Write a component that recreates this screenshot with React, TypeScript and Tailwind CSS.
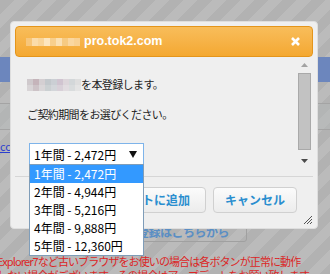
import React from 'react'

const jp = "font-['Noto_Sans_CJK_JP','Noto_Sans',sans-serif]"

const titleMosaic = ['#f7c67a', '#fbdcaa', '#f9d59a', '#fde6bf', '#f8cf8c', '#fbe0b2', '#f6ca82', '#fad7a0', '#f9d193']
const nameMosaicTop = ['#cfc9cc', '#c5b4ba', '#d4cfd2', '#c3c8cc', '#cbcfd4', '#d0c4d0', '#dcd5da', '#d3d7d9', '#dedede']
const nameMosaicBottom = ['#d8d4d6', '#cdc3c7', '#d9d6d8', '#cbd0d2', '#d3d6da', '#d8d0d8', '#e1dce0', '#d9dcdd', '#e4e4e4']

const plans = [
  '1年間 - 2,472円',
  '2年間 - 4,944円',
  '3年間 - 5,216円',
  '4年間 - 9,888円',
  '5年間 - 12,360円',
]

export default function App() {
  return (
    <div className={`relative w-[330px] h-[274px] overflow-hidden bg-[repeating-linear-gradient(135deg,#b2b2b2_0px,#b2b2b2_10px,#bbbbbb_10px,#bbbbbb_20px)] ${jp}`}>
      {/* page behind the overlay */}
      <div className="pt-[57px]">
        <div className="h-[25px] bg-[#6c86bd]" />
        <div className="h-[22px] border-b border-[#a4a4a4]" />
        <div className="h-[26px] border-b border-[#a4a4a4] bg-[#b3bab9]/40" />
        <div className="h-[10px]" />
        <p className="text-[11px] leading-[13px] text-[#2b3fcf] underline">co</p>
        <div className="h-[68px]" />
        <div className="ml-[40px] w-[207px] h-[21px] border border-[#a0a0a0] rounded-[3px] flex items-center justify-end pr-[17px] text-[12px] font-bold text-[#5a8ec4] tracking-[-0.5px]">
          新規登録はこちらから
        </div>
        <p className="mt-[12px] -ml-[3px] whitespace-nowrap text-[11px] leading-[14px] tracking-[-0.9px] text-[#dc2626]">
          Explorer7など古いブラウザをお使いの場合は各ボタンが正常に動作
          <br />
          しない場合がございます。その場合はアップデートをお願い致します。
        </p>
      </div>

      {/* dialog */}
      <div className="absolute left-[10px] top-[21px] w-[308px] h-[208px] rounded-[4px] border border-[#dedede] bg-[#efefef] p-[4px] flex flex-col">
        <div className="h-[31px] shrink-0 rounded-[4px] border border-[#e4951b] bg-gradient-to-b from-[#f8bd5a] to-[#f4a830] flex items-center pl-[10px] pr-[12px]">
          <div className="flex">
            {titleMosaic.map((c, i) => (
              <span key={i} className="w-[6px] h-[8px]" style={{ background: c }} />
            ))}
          </div>
          <span className="ml-[4px] font-['Liberation_Sans',sans-serif] text-[12.5px] font-bold text-white">pro.tok2.com</span>
          <svg className="ml-auto" width="9" height="9" viewBox="0 0 9 9">
            <path d="M1 1L8 8M8 1L1 8" stroke="#fff" strokeWidth="2.6" />
          </svg>
        </div>

        <div className="h-[119px] shrink-0 flex">
          <div className="flex-1 pl-[12px] pt-[21px] text-[11px] leading-[13px] tracking-[-0.6px] text-[#222]">
            <div className="flex items-center">
              <div className="flex flex-col">
                <div className="flex">
                  {nameMosaicTop.map((c, i) => (
                    <span key={i} className="w-[6px] h-[6px]" style={{ background: c }} />
                  ))}
                </div>
                <div className="flex">
                  {nameMosaicBottom.map((c, i) => (
                    <span key={i} className="w-[6px] h-[6px]" style={{ background: c }} />
                  ))}
                </div>
              </div>
              <span>を本登録します。</span>
            </div>
            <p className="mt-[17px]">ご契約期間をお選びください。</p>
            <div className="mt-[22px] ml-[2px] w-[115px] h-[22px] border border-[#7eb4ea] bg-white flex items-center pl-[4px] pr-[6px] text-[12px] tracking-normal text-black">
              <span>1年間 - 2,472円</span>
              <svg className="ml-auto" width="8" height="7" viewBox="0 0 8 7">
                <path d="M0 0H8L4 7Z" fill="#111" />
              </svg>
            </div>
          </div>
          {/* scrollbar */}
          <div className="w-[14px] mr-[2px] mt-[1px] h-[111px] flex flex-col items-center">
            <svg className="mt-[5px]" width="7" height="4" viewBox="0 0 7 4">
              <path d="M0 4H7L3.5 0Z" fill="#a3a3a3" />
            </svg>
            <div className="mt-[6px] w-[13px] h-[77px] bg-[#c2c2c2] border border-[#a9a9a9]" />
            <svg className="mt-[9px]" width="7" height="4" viewBox="0 0 7 4">
              <path d="M0 0H7L3.5 4Z" fill="#4a4a4a" />
            </svg>
          </div>
        </div>

        <div className="border-t border-[#d6d6d6] pt-[10px] flex justify-end gap-[7px] pr-[16px] text-[12px] font-bold text-[#2a8ecf]">
          <button className="w-[104px] h-[26px] rounded-[4px] border border-[#d0d0d0] bg-gradient-to-b from-[#fbfbfb] to-[#ececec]">
            カートに追加
          </button>
          <button className="w-[84px] h-[26px] rounded-[4px] border border-[#d0d0d0] bg-gradient-to-b from-[#fbfbfb] to-[#ececec]">
            キャンセル
          </button>
        </div>

        <svg className="absolute right-[4px] bottom-[3px]" width="10" height="10" viewBox="0 0 10 10">
          <path d="M9 1L1 9M9 4L4 9M9 7L7 9" stroke="#555" strokeWidth="1" />
        </svg>
      </div>

      {/* open select list */}
      <div className="absolute left-[29px] top-[164px] w-[115px] border border-[#7f9db9] bg-white text-[12px] text-black">
        {plans.map((p, i) => (
          <div
            key={p}
            className={`h-[18px] pl-[4px] flex items-center ${i === 0 ? 'bg-[#3399ff] text-white' : ''}`}
          >
            {p}
          </div>
        ))}
      </div>
    </div>
  )
}
